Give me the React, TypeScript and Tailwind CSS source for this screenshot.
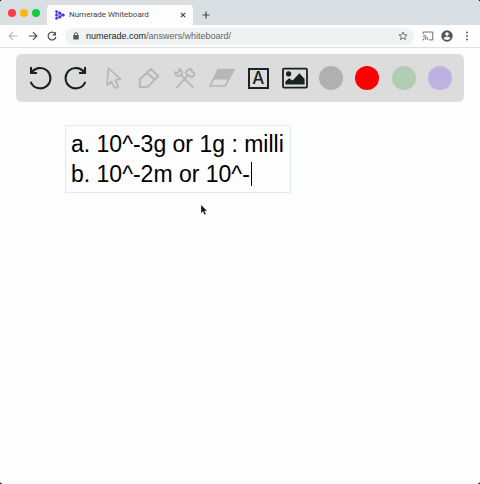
import React from "react";
import type { ReactNode } from "react";

function ToolButton({ label, muted, children }: { label: string; muted?: boolean; children: ReactNode }) {
  return (
    <button
      type="button"
      aria-label={label}
      className={`flex h-6 w-6 items-center justify-center ${muted ? "text-[#b4b8b7]" : "text-[#1c2222]"}`}
    >
      {children}
    </button>
  );
}

const lineProps = {
  fill: "none",
  stroke: "currentColor",
  strokeLinejoin: "round" as const,
  strokeLinecap: "round" as const,
};

const colors = [
  { name: "Gray", fill: "bg-[#b0b0b0]" },
  { name: "Red", fill: "bg-[#ff0000]" },
  { name: "Green", fill: "bg-[#b1cdb1]" },
  { name: "Violet", fill: "bg-[#beb2e3]" },
];

function TabStrip() {
  return (
    <div className="flex h-[25px] items-end bg-[#dadfe3] pl-2">
      <div className="flex h-full items-center gap-1 pt-px">
        {["bg-[#f93c43]", "bg-[#fdb60e]", "bg-[#0fcf40]"].map((fill) => (
          <span key={fill} className={`h-2 w-2 rounded-full ${fill}`} />
        ))}
      </div>
      <div className="ml-[7px] flex h-5 w-[146px] items-center rounded-t-[4px] bg-[#fdfdfd] pr-[7px] pl-2">
        <svg viewBox="0 0 10 10" className="h-[10px] w-[10px] shrink-0" aria-hidden="true">
          <path d="M1.4 1.2v7.6M1.4 1.2L8.4 5 1.4 8.8M1.4 5h7" fill="none" stroke="#6d5ee4" strokeWidth="1.2" />
          <g fill="#4a35dc">
            <circle cx="1.5" cy="1.5" r="1.3" />
            <circle cx="1.5" cy="5" r="1.3" />
            <circle cx="1.5" cy="8.5" r="1.3" />
            <circle cx="4.7" cy="3.1" r="1.5" />
            <circle cx="4.7" cy="6.9" r="1.5" />
            <circle cx="8.2" cy="5" r="1.5" />
          </g>
        </svg>
        <span className="ml-1 flex-1 text-[8px] leading-3 whitespace-nowrap text-[#3f4347]">Numerade Whiteboard</span>
        <button type="button" aria-label="Close tab" className="text-[#3f4347]">
          <svg viewBox="0 0 6 6" className="h-[6px] w-[6px]">
            <path d="M.8.8l4.4 4.4M5.2.8L.8 5.2" fill="none" stroke="currentColor" strokeWidth="1.1" />
          </svg>
        </button>
      </div>
      <button type="button" aria-label="New tab" className="ml-2 flex h-5 w-[10px] items-center text-[#45494d]">
        <svg viewBox="0 0 10 10" className="h-[10px] w-[10px]">
          <path d="M5 1.5v7M1.5 5h7" fill="none" stroke="currentColor" strokeWidth="1.2" />
        </svg>
      </button>
    </div>
  );
}

function AddressBar() {
  return (
    <div className="flex h-[23px] items-center border-b border-[#dfe1e1] bg-[#fdfdfd] pr-[11px] pl-2">
      <button type="button" aria-label="Back" className="text-[#b2b4b6]">
        <svg viewBox="0 0 10 10" className="h-[10px] w-[10px]">
          <path d="M9.2 5H1.2M5 1.2L1.2 5 5 8.8" fill="none" stroke="currentColor" strokeWidth="1.1" />
        </svg>
      </button>
      <button type="button" aria-label="Forward" className="ml-[10px] text-[#4c5054]">
        <svg viewBox="0 0 10 10" className="h-[10px] w-[10px]">
          <path d="M.8 5h8M5 1.2L8.8 5 5 8.8" fill="none" stroke="currentColor" strokeWidth="1.2" />
        </svg>
      </button>
      <button type="button" aria-label="Reload" className="ml-[9px] text-[#4c5054]">
        <svg viewBox="0 0 10 10" className="h-[10px] w-[10px]">
          <path d="M8.1 2.6A3.9 3.9 0 1 0 8.9 6" fill="none" stroke="currentColor" strokeWidth="1.2" />
          <path d="M9 .6v3.8H5.2z" fill="currentColor" />
        </svg>
      </button>
      <div className="ml-2 flex h-[17px] flex-1 items-center rounded-full bg-[#eff2f2] pr-[6px] pl-2">
        <svg viewBox="0 0 6 8" className="h-2 w-[6px]" aria-hidden="true">
          <path d="M1.4 3.5V2.2a1.6 1.6 0 0 1 3.2 0v1.3" fill="none" stroke="#54585b" strokeWidth=".9" />
          <rect x=".3" y="3" width="5.4" height="4.6" rx=".6" fill="#54585b" />
        </svg>
        <a
          href="#whiteboard"
          className="ml-[7px] flex-1 font-['Liberation_Sans',Arial,sans-serif] text-[9px] leading-3 whitespace-nowrap text-[#62666a]"
        >
          <span className="text-[#202326]">numerade.com</span>/answers/whiteboard/
        </a>
        <button type="button" aria-label="Bookmark" className="text-[#54585b]">
          <svg viewBox="0 0 10 10" className="h-[10px] w-[10px]">
            <path
              d="M5 1l1.15 2.65 2.85.25-2.15 1.9.65 2.8L5 7.1 2.5 8.6l.65-2.8L1 3.9l2.85-.25z"
              fill="none"
              stroke="currentColor"
              strokeWidth=".8"
            />
          </svg>
        </button>
      </div>
      <button type="button" aria-label="Cast" className="ml-2 text-[#5b5f62]">
        <svg viewBox="0 0 12 10" className="h-[10px] w-3">
          <path
            d="M1.2 3V1h9.6v7.9H7M1.2 4.3A4.6 4.6 0 0 1 5.8 8.9M1.2 6.2a2.7 2.7 0 0 1 2.7 2.7"
            fill="none"
            stroke="currentColor"
            strokeWidth=".9"
          />
          <path d="M.8 7.7A1.5 1.5 0 0 1 2.3 9.3H.8z" fill="currentColor" />
        </svg>
      </button>
      <button type="button" aria-label="Profile" className="ml-[7px] text-[#54575a]">
        <svg viewBox="0 0 12 12" className="h-3 w-3">
          <circle cx="6" cy="6" r="5.7" fill="currentColor" />
          <circle cx="6" cy="4.1" r="1.8" fill="#fdfdfd" />
          <path d="M2.5 8.3C3.2 7.2 4.8 6.8 6 6.8s2.8.4 3.5 1.5A4.2 4.2 0 0 1 6 10a4.2 4.2 0 0 1-3.5-1.7z" fill="#fdfdfd" />
        </svg>
      </button>
      <button type="button" aria-label="Menu" className="ml-3 text-[#54575a]">
        <svg viewBox="0 0 4 10" className="h-[10px] w-1">
          <circle cx="2" cy="1.5" r=".95" fill="currentColor" />
          <circle cx="2" cy="5" r=".95" fill="currentColor" />
          <circle cx="2" cy="8.5" r=".95" fill="currentColor" />
        </svg>
      </button>
    </div>
  );
}

function Toolbar() {
  return (
    <div role="toolbar" className="flex h-12 items-center justify-between rounded-md bg-[#dcdcdc] px-3">
      <ToolButton label="Undo">
        <svg viewBox="0 0 24 24" className="h-6 w-6">
          <path d="M3.4 7A10.2 10.2 0 1 1 3 16.6M3 1.8V7h5.2" {...lineProps} strokeWidth="2.1" strokeLinejoin="miter" />
        </svg>
      </ToolButton>
      <ToolButton label="Redo">
        <svg viewBox="0 0 24 24" className="h-6 w-6">
          <path d="M20.6 7A10.2 10.2 0 1 0 21 16.6M21 1.8V7h-5.2" {...lineProps} strokeWidth="2.1" strokeLinejoin="miter" />
        </svg>
      </ToolButton>
      <ToolButton label="Select" muted>
        <svg viewBox="0 0 24 24" className="h-6 w-6">
          <path d="M7.4 2L6 19l4.4-3.3 3.2 6.5 3.6-1.8-3-6.2 5.2-1.1z" {...lineProps} strokeWidth="1.7" />
        </svg>
      </ToolButton>
      <ToolButton label="Pen" muted>
        <svg viewBox="0 0 24 24" className="h-6 w-6">
          <path d="M2.8 21v-7.6L13.9 2.9l7.4 7.3-10.6 10.6zM9.9 6.5l7.6 7.3" {...lineProps} strokeWidth="2" />
        </svg>
      </ToolButton>
      <ToolButton label="Tools" muted>
        <svg viewBox="0 0 24 24" className="h-6 w-6">
          <path
            d="M2 6.3C1.8 8.8 3.8 10.4 6.6 9.9L8.8 8.3C10 5.8 8.6 3.5 6 3.2M2 6.3l2.4.8L6.4 5.6 6 3.2M8.2 9.4l11.6 11.8M4 21.2L14.4 9.8"
            {...lineProps}
            strokeWidth="1.9"
          />
          <path d="M12.8 6.4l2.6-3 3-.2.4 2.3 2.5 1.3-.2 2.6-2.2 1.9-2.4-1.8-2.2.2z" {...lineProps} strokeWidth="1.9" />
        </svg>
      </ToolButton>
      <ToolButton label="Eraser" muted>
        <svg viewBox="0 0 26 24" className="h-6 w-[26px] shrink-0">
          <path d="M9 3.6h16L16.2 20H1z" {...lineProps} strokeWidth="1.7" />
          <path d="M9 3.6h16l-5.3 10H3.8z" fill="currentColor" />
        </svg>
      </ToolButton>
      <ToolButton label="Text">
        <span className="flex h-[21px] w-[21px] items-center justify-center border-2 border-current font-[Inter,sans-serif] text-[17px] leading-none font-medium">
          A
        </span>
      </ToolButton>
      <ToolButton label="Image">
        <svg viewBox="0 0 26 24" className="h-6 w-[26px] shrink-0">
          <rect x="1" y="2.6" width="24" height="19" rx="1.2" {...lineProps} strokeWidth="1.8" />
          <circle cx="6.6" cy="7.8" r="2.6" fill="currentColor" />
          <path d="M3.4 18.6v-3.2l3.8-3.2 3.4 2.4 6.8-7.4 5.2 5.8v5.6z" fill="currentColor" />
        </svg>
      </ToolButton>
      {colors.map((color) => (
        <button key={color.name} type="button" aria-label={color.name} className={`h-6 w-6 rounded-full ${color.fill}`} />
      ))}
    </div>
  );
}

export default function App() {
  return (
    <div className="min-h-screen bg-black font-[Roboto,'Liberation_Sans',sans-serif]">
      <div className="flex min-h-screen flex-col overflow-hidden rounded-[3px] bg-[#fdfdfd]">
        <TabStrip />
        <AddressBar />
        <main className="relative flex-1 px-4 pt-[6px]">
          <Toolbar />
          <div className="relative mt-[23px] ml-[49px] w-[226px]">
            <textarea
              aria-label="Whiteboard text"
              rows={2}
              spellCheck={false}
              defaultValue={"a. 10^-3g or 1g : milli\nb. 10^-2m or 10^-"}
              className="block w-full resize-none overflow-hidden border border-[#e2e9f7] bg-transparent py-[3px] pr-0 pl-[5px] font-['Liberation_Sans',Arial,sans-serif] text-[23px] leading-[30px] text-black outline-none"
            />
            <span aria-hidden="true" className="absolute top-[37px] left-[186px] h-6 w-px bg-black" />
          </div>
          <svg viewBox="0 0 8 12" className="absolute top-[156px] left-[200px] h-3 w-2" aria-hidden="true">
            <path d="M1 .8v8.4l2-1.8 1.5 3.4 1.5-.7-1.5-3.2h2.7z" fill="#111" stroke="#d8d8d8" strokeWidth=".4" />
          </svg>
        </main>
      </div>
    </div>
  );
}
